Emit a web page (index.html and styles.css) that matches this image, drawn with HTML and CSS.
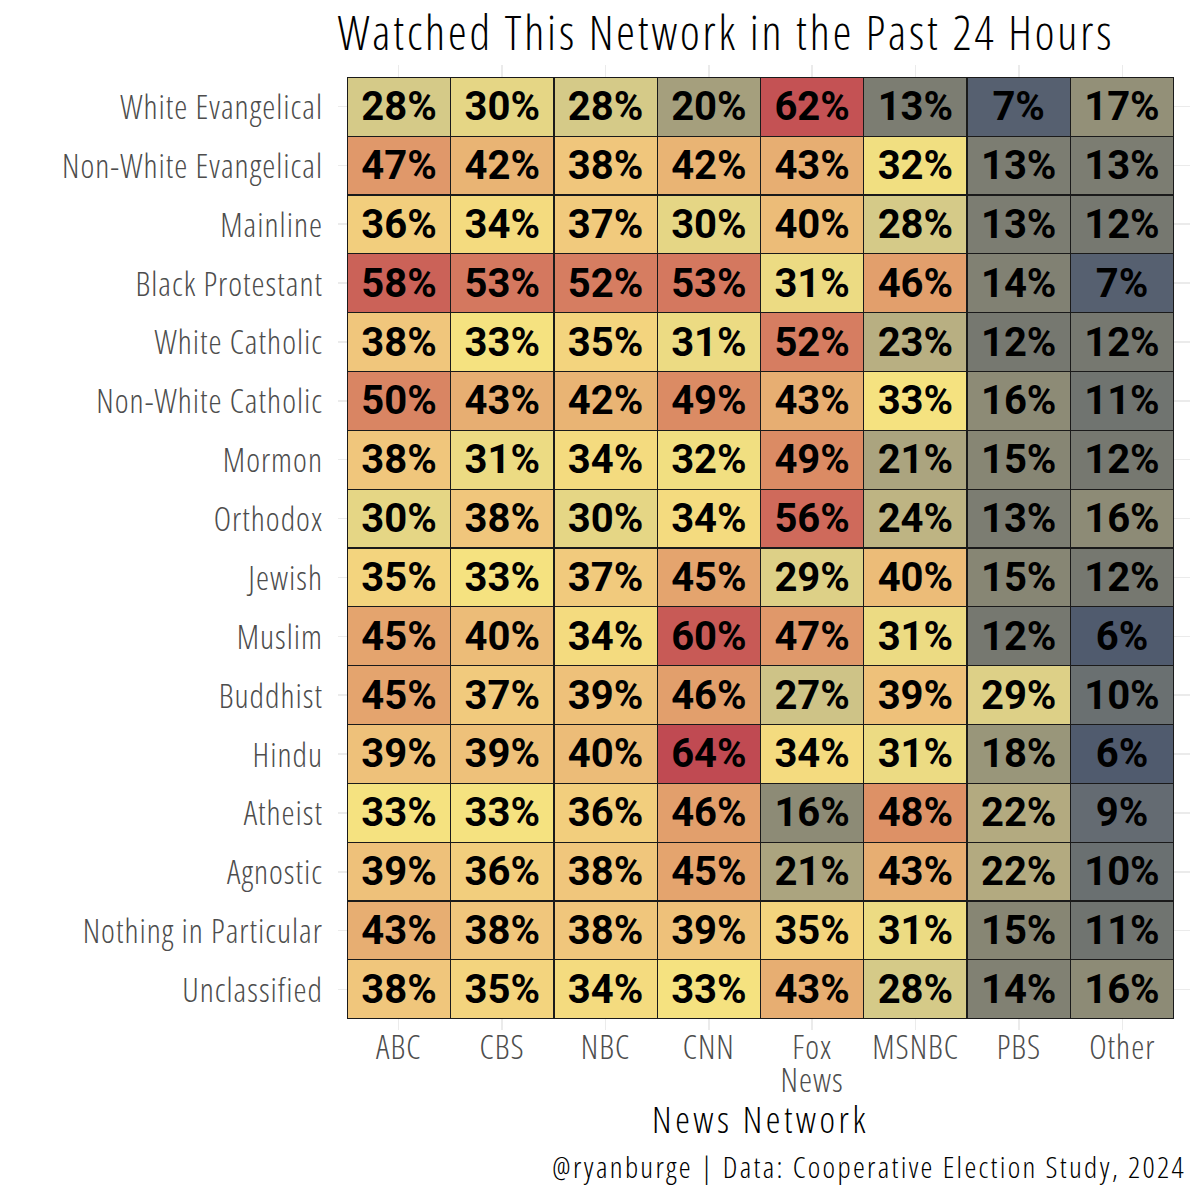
FILE: index.html
```html
<!DOCTYPE html>
<html>
<head>
<meta charset="utf-8">
<link rel="stylesheet" href="styles.css">
</head>
<body>
<h1 class="title">Watched This Network in the Past 24 Hours</h1>
<div class="main">
  <div class="ylabels">
    <div class="yl">White Evangelical</div>
    <div class="yl">Non-White Evangelical</div>
    <div class="yl">Mainline</div>
    <div class="yl">Black Protestant</div>
    <div class="yl">White Catholic</div>
    <div class="yl">Non-White Catholic</div>
    <div class="yl">Mormon</div>
    <div class="yl">Orthodox</div>
    <div class="yl">Jewish</div>
    <div class="yl">Muslim</div>
    <div class="yl">Buddhist</div>
    <div class="yl">Hindu</div>
    <div class="yl">Atheist</div>
    <div class="yl">Agnostic</div>
    <div class="yl">Nothing in Particular</div>
    <div class="yl">Unclassified</div>
  </div>
  <div class="panel">
    <div class="tiles">
      <div class="c v28">28%</div><div class="c v30">30%</div><div class="c v28">28%</div><div class="c v20">20%</div><div class="c v62">62%</div><div class="c v13">13%</div><div class="c v7">7%</div><div class="c v17">17%</div>
      <div class="c v47">47%</div><div class="c v42">42%</div><div class="c v38">38%</div><div class="c v42">42%</div><div class="c v43">43%</div><div class="c v32">32%</div><div class="c v13">13%</div><div class="c v13">13%</div>
      <div class="c v36">36%</div><div class="c v34">34%</div><div class="c v37">37%</div><div class="c v30">30%</div><div class="c v40">40%</div><div class="c v28">28%</div><div class="c v13">13%</div><div class="c v12">12%</div>
      <div class="c v58">58%</div><div class="c v53">53%</div><div class="c v52">52%</div><div class="c v53">53%</div><div class="c v31">31%</div><div class="c v46">46%</div><div class="c v14">14%</div><div class="c v7">7%</div>
      <div class="c v38">38%</div><div class="c v33">33%</div><div class="c v35">35%</div><div class="c v31">31%</div><div class="c v52">52%</div><div class="c v23">23%</div><div class="c v12">12%</div><div class="c v12">12%</div>
      <div class="c v50">50%</div><div class="c v43">43%</div><div class="c v42">42%</div><div class="c v49">49%</div><div class="c v43">43%</div><div class="c v33">33%</div><div class="c v16">16%</div><div class="c v11">11%</div>
      <div class="c v38">38%</div><div class="c v31">31%</div><div class="c v34">34%</div><div class="c v32">32%</div><div class="c v49">49%</div><div class="c v21">21%</div><div class="c v15">15%</div><div class="c v12">12%</div>
      <div class="c v30">30%</div><div class="c v38">38%</div><div class="c v30">30%</div><div class="c v34">34%</div><div class="c v56">56%</div><div class="c v24">24%</div><div class="c v13">13%</div><div class="c v16">16%</div>
      <div class="c v35">35%</div><div class="c v33">33%</div><div class="c v37">37%</div><div class="c v45">45%</div><div class="c v29">29%</div><div class="c v40">40%</div><div class="c v15">15%</div><div class="c v12">12%</div>
      <div class="c v45">45%</div><div class="c v40">40%</div><div class="c v34">34%</div><div class="c v60">60%</div><div class="c v47">47%</div><div class="c v31">31%</div><div class="c v12">12%</div><div class="c v6">6%</div>
      <div class="c v45">45%</div><div class="c v37">37%</div><div class="c v39">39%</div><div class="c v46">46%</div><div class="c v27">27%</div><div class="c v39">39%</div><div class="c v29">29%</div><div class="c v10">10%</div>
      <div class="c v39">39%</div><div class="c v39">39%</div><div class="c v40">40%</div><div class="c v64">64%</div><div class="c v34">34%</div><div class="c v31">31%</div><div class="c v18">18%</div><div class="c v6">6%</div>
      <div class="c v33">33%</div><div class="c v33">33%</div><div class="c v36">36%</div><div class="c v46">46%</div><div class="c v16">16%</div><div class="c v48">48%</div><div class="c v22">22%</div><div class="c v9">9%</div>
      <div class="c v39">39%</div><div class="c v36">36%</div><div class="c v38">38%</div><div class="c v45">45%</div><div class="c v21">21%</div><div class="c v43">43%</div><div class="c v22">22%</div><div class="c v10">10%</div>
      <div class="c v43">43%</div><div class="c v38">38%</div><div class="c v38">38%</div><div class="c v39">39%</div><div class="c v35">35%</div><div class="c v31">31%</div><div class="c v15">15%</div><div class="c v11">11%</div>
      <div class="c v38">38%</div><div class="c v35">35%</div><div class="c v34">34%</div><div class="c v33">33%</div><div class="c v43">43%</div><div class="c v28">28%</div><div class="c v14">14%</div><div class="c v16">16%</div>
    </div>
  </div>
</div>
<div class="xlabels">
  <div class="xl">ABC</div>
  <div class="xl">CBS</div>
  <div class="xl">NBC</div>
  <div class="xl">CNN</div>
  <div class="xl">Fox<br>News</div>
  <div class="xl">MSNBC</div>
  <div class="xl">PBS</div>
  <div class="xl">Other</div>
</div>
<div class="xtitle">News Network</div>
<div class="caption">@ryanburge | Data: Cooperative Election Study, 2024</div>
</body>
</html>
```
FILE: styles.css
```css
* { box-sizing: border-box; margin: 0; padding: 0; }
body {
  width: 1200px;
  height: 1200px;
  overflow: hidden;
  background: #fff;
  color: #000;
  font-family: "Open Sans", "DejaVu Sans Condensed", sans-serif;
  font-stretch: 75%;
  font-weight: 300;
}
.title {
  font-weight: 300;
  font-size: 47px;
  letter-spacing: 2.9px;
  line-height: 64px;
  height: 65px;
  padding-left: 252px;
  text-align: center;
  white-space: nowrap;
}
.main {
  display: flex;
  gap: 15px;
}
.ylabels {
  width: 323px;
  padding-top: 12px;
  display: flex;
  flex-direction: column;
}
.yl {
  height: 58.875px;
  display: flex;
  align-items: center;
  justify-content: flex-end;
  font-size: 33px;
  letter-spacing: 1px;
  color: #4d4d4d;
  white-space: nowrap;
}
.panel {
  width: 852px;
  padding: 12px 16px 11px 9px;
  background-image:
    repeating-linear-gradient(to bottom, transparent 0 28.7px, #ebebeb 28.7px 30.2px, transparent 30.2px 58.875px),
    repeating-linear-gradient(to right, transparent 0 51px, #ebebeb 51px 52.5px, transparent 52.5px 103.375px);
  background-origin: content-box;
  background-clip: border-box;
}
.tiles {
  width: 827px;
  height: 942px;
  display: grid;
  grid-template-columns: repeat(8, 1fr);
  grid-template-rows: repeat(16, 1fr);
  gap: 1.2px;
  padding: 1px;
  background: #1a1a1a;
}
.c {
  display: flex;
  align-items: center;
  justify-content: center;
  font-family: "Roboto", "Liberation Sans", sans-serif;
  font-stretch: normal;
  font-weight: bold;
  font-size: 40px;
  letter-spacing: 0;
  color: #000;
}
.xlabels {
  margin-left: 347px;
  width: 827px;
  display: grid;
  grid-template-columns: repeat(8, 1fr);
}
.xl {
  text-align: center;
  font-size: 33px;
  letter-spacing: 1px;
  line-height: 33px;
  color: #4d4d4d;
}
.xtitle {
  margin-left: 347px;
  width: 827px;
  text-align: center;
  font-size: 37px;
  letter-spacing: 3.5px;
  line-height: 40px;
  margin-top: 3px;
}
.caption {
  text-align: right;
  padding-right: 14px;
  font-size: 30px;
  letter-spacing: 2.3px;
  line-height: 36px;
  margin-top: 10px;
  white-space: nowrap;
}
.v6 { background: #505b6e; }
.v7 { background: #566070; }
.v9 { background: #646b72; }
.v10 { background: #6a7071; }
.v11 { background: #707470; }
.v12 { background: #767870; }
.v13 { background: #7c7d72; }
.v14 { background: #818173; }
.v15 { background: #878674; }
.v16 { background: #8d8b76; }
.v17 { background: #939078; }
.v18 { background: #99967a; }
.v20 { background: #a59f7d; }
.v21 { background: #aba47f; }
.v22 { background: #b3aa80; }
.v23 { background: #b8af82; }
.v24 { background: #beb483; }
.v27 { background: #cec387; }
.v28 { background: #d5ca88; }
.v29 { background: #ddd087; }
.v30 { background: #e5d685; }
.v31 { background: #ecdb83; }
.v32 { background: #f1df81; }
.v33 { background: #f5e280; }
.v34 { background: #f4db7f; }
.v35 { background: #f3d47e; }
.v36 { background: #f2ce7d; }
.v37 { background: #f1ca7d; }
.v38 { background: #f0c67c; }
.v39 { background: #eec17a; }
.v40 { background: #ecbc78; }
.v42 { background: #e9b474; }
.v43 { background: #e7ae72; }
.v45 { background: #e4a46e; }
.v46 { background: #e29f6c; }
.v47 { background: #e0986a; }
.v48 { background: #dd9166; }
.v49 { background: #db8b64; }
.v50 { background: #d98563; }
.v52 { background: #d67d61; }
.v53 { background: #d4785f; }
.v56 { background: #cf6a5b; }
.v58 { background: #cb6258; }
.v60 { background: #c85a56; }
.v62 { background: #c45254; }
.v64 { background: #c04a52; }
```
